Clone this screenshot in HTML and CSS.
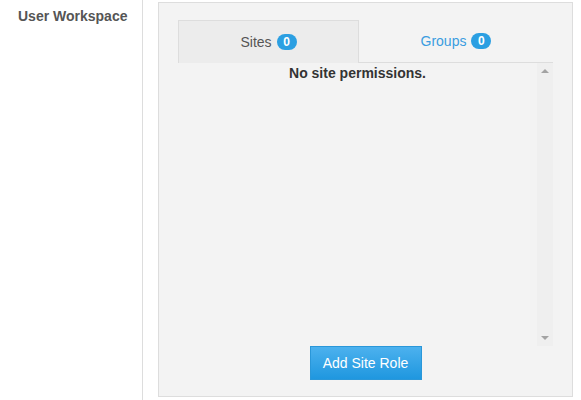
FILE: index.html
```html
<!DOCTYPE html>
<html>
<head>
<meta charset="utf-8">
<link rel="stylesheet" href="styles.css">
</head>
<body>
<div class="page">
  <div class="label-col"><span class="label">User Workspace</span></div>
  <div class="panel">
    <div class="tabs">
      <div class="tab active">Sites <span class="badge">0</span></div>
      <div class="tab">Groups <span class="badge">0</span></div>
    </div>
    <div class="list">
      <div class="list-body"><p class="empty">No site permissions.</p></div>
      <div class="scrollbar"><span class="arrow up"></span><span class="arrow down"></span></div>
    </div>
    <div class="actions"><button class="btn">Add Site Role</button></div>
  </div>
</div>
</body>
</html>
```
FILE: styles.css
```css
html, body { margin: 0; padding: 0; background: #fff; }
body { font-family: "Liberation Sans", Arial, sans-serif; }
.page { display: flex; height: 400px; }
.label-col { width: 142px; border-right: 1px solid #ddd; box-sizing: content-box; }
.label { display: block; padding: 8px 0 0 18px; font-size: 14px; font-weight: bold; color: #555; }
.panel {
  margin: 2px 0 0 15px; width: 415px; height: 395px; box-sizing: border-box;
  background: #f3f3f3; border: 1px solid #ddd; padding: 17px 19px 0 19px;
  display: flex; flex-direction: column;
}
.tabs { display: flex; height: 43px; box-sizing: border-box; }
.tab {
  flex: 1; display: flex; align-items: center; justify-content: center; gap: 5px;
  font-size: 14px; color: #3a9de0; border-bottom: 1px solid #ddd; padding-bottom: 1px;
}
.tab.active { flex: 0 0 181px; box-sizing: border-box; background: #ececec; color: #555; border: 1px solid #ddd; border-bottom: none; }
.badge {
  display: inline-block; background: #2b9fe2; color: #fff; font-weight: bold; font-size: 12px;
  border-radius: 8px; min-width: 20px; height: 16px; line-height: 16px; text-align: center;
}
.list { display: flex; height: 283px; }
.list-body { flex: 1; }
.empty { margin: 2px 0 0; text-align: center; font-size: 14px; font-weight: bold; color: #333; }
.scrollbar { width: 16px; background: #efefef; position: relative; }
.arrow { position: absolute; left: 4px; width: 0; height: 0; border-left: 4px solid transparent; border-right: 4px solid transparent; }
.arrow.up { top: 6px; border-bottom: 4px solid #a3a3a3; }
.arrow.down { bottom: 6px; border-top: 4px solid #a3a3a3; }
.actions { display: flex; justify-content: center; }
.btn {
  width: 112px; height: 34px; font-family: inherit; font-size: 14px; color: #fff;
  background: linear-gradient(#4cb1ee, #1f97df); border: 1px solid #2a97d9; border-radius: 0;
}
```
